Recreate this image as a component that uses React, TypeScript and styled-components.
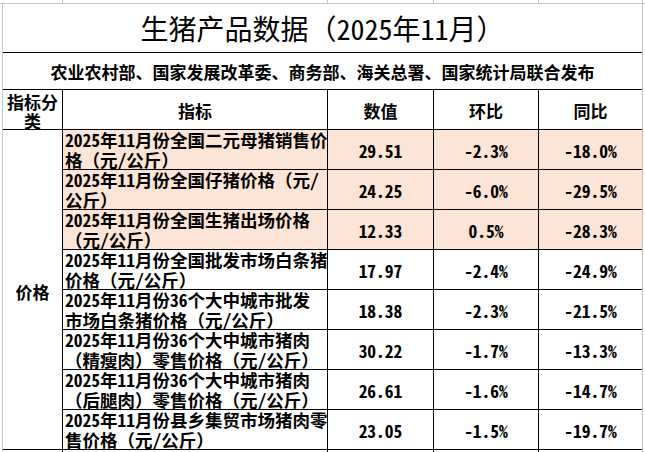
import React from "react";
import styled, { createGlobalStyle } from "styled-components";

const GlobalStyle = createGlobalStyle`
  html, body {
    margin: 0;
    padding: 0;
    background: #ffffff;
    overflow: hidden;
  }
  body {
    width: 645px;
    height: 452px;
    font-family: "Noto Sans CJK SC", "Liberation Sans", sans-serif;
    color: #000000;
  }
`;

const GRID_GRAY = "#c4c4c4";
const PEACH = "#fce4d6";

const Page = styled.div`
  width: 645px;
  height: 452px;
  overflow: hidden;
`;

const TopStrip = styled.div`
  display: grid;
  grid-template-columns: 63px 265px 106px 105px 104px 1fr;
  height: 3px;
  border-bottom: 1px solid ${GRID_GRAY};
`;

const StripCell = styled.div<{ $last?: boolean }>`
  border-right: ${(p) => (p.$last ? "none" : `1px solid ${GRID_GRAY}`)};
`;

const Sheet = styled.div`
  margin-left: 2px;
  width: 639px;
  display: grid;
  grid-template-columns: 59px 264px 105px 104px 103px;
  grid-template-rows: 48px 36px 39px repeat(8, 39px) 20px;
  gap: 1px;
  background: #000000;
  border-left: 1px solid ${GRID_GRAY};
  border-right: 1px solid ${GRID_GRAY};
`;

const Cell = styled.div<{ $fill?: boolean }>`
  background: ${(p) => (p.$fill ? PEACH : "#ffffff")};
  display: flex;
  align-items: center;
  justify-content: center;
  overflow: visible;
  min-width: 0;
`;

const TitleCell = styled(Cell)`
  grid-column: 1 / -1;
  font-size: 28px;
  font-weight: 400;
  line-height: 1;
`;

const SubtitleCell = styled(Cell)`
  grid-column: 1 / -1;
  font-size: 17px;
  font-weight: 700;
  line-height: 20px;
  padding-top: 2px;
`;

const HeaderCell = styled(Cell)`
  font-size: 17px;
  font-weight: 700;
  line-height: 19px;
  text-align: center;
  padding-top: 2px;
`;

const CategoryCell = styled(Cell)`
  grid-column: 1;
  grid-row: 4 / span 8;
  font-size: 17px;
  font-weight: 700;
  padding-top: 3px;
`;

const IndicatorCell = styled(Cell)`
  justify-content: flex-start;
  padding-left: 2px;
  font-size: 17.5px;
  font-weight: 700;
  line-height: 20px;
`;

const Lines = styled.div`
  display: flex;
  flex-direction: column;
  padding-top: 1px;
`;

const Line = styled.span`
  white-space: nowrap;
`;

/* ASCII runs use the font's half-width forms, as the sheet's CJK font does */
const Latin = styled.span`
  font-feature-settings: "hwid" 1;
`;

const NumberCell = styled(Cell)`
  font-size: 17.5px;
  font-weight: 700;
  line-height: 20px;
  padding-top: 2px;
  font-feature-settings: "hwid" 1;
`;

function Mixed({ text }: { text: string }) {
  const parts = text.split(/([\x20-\x7e]+)/).filter((p) => p.length > 0);
  return (
    <>
      {parts.map((p, i) =>
        /^[\x20-\x7e]+$/.test(p) ? (
          <Latin key={i}>{p}</Latin>
        ) : (
          <React.Fragment key={i}>{p}</React.Fragment>
        )
      )}
    </>
  );
}

type Row = {
  lines: string[];
  value: string;
  mom: string;
  yoy: string;
  highlight?: boolean;
};

const rows: Row[] = [
  {
    lines: ["2025年11月份全国二元母猪销售价", "格（元/公斤）"],
    value: "29.51",
    mom: "-2.3%",
    yoy: "-18.0%",
    highlight: true,
  },
  {
    lines: ["2025年11月份全国仔猪价格（元/", "公斤）"],
    value: "24.25",
    mom: "-6.0%",
    yoy: "-29.5%",
    highlight: true,
  },
  {
    lines: ["2025年11月份全国生猪出场价格", "（元/公斤）"],
    value: "12.33",
    mom: "0.5%",
    yoy: "-28.3%",
    highlight: true,
  },
  {
    lines: ["2025年11月份全国批发市场白条猪", "价格（元/公斤）"],
    value: "17.97",
    mom: "-2.4%",
    yoy: "-24.9%",
  },
  {
    lines: ["2025年11月份36个大中城市批发", "市场白条猪价格（元/公斤）"],
    value: "18.38",
    mom: "-2.3%",
    yoy: "-21.5%",
  },
  {
    lines: ["2025年11月份36个大中城市猪肉", "（精瘦肉）零售价格（元/公斤）"],
    value: "30.22",
    mom: "-1.7%",
    yoy: "-13.3%",
  },
  {
    lines: ["2025年11月份36个大中城市猪肉", "（后腿肉）零售价格（元/公斤）"],
    value: "26.61",
    mom: "-1.6%",
    yoy: "-14.7%",
  },
  {
    lines: ["2025年11月份县乡集贸市场猪肉零", "售价格（元/公斤）"],
    value: "23.05",
    mom: "-1.5%",
    yoy: "-19.7%",
  },
];

export default function App() {
  return (
    <Page>
      <GlobalStyle />
      <TopStrip>
        <StripCell />
        <StripCell />
        <StripCell />
        <StripCell />
        <StripCell />
        <StripCell $last />
      </TopStrip>
      <Sheet>
        <TitleCell>
          <Mixed text="生猪产品数据（2025年11月）" />
        </TitleCell>
        <SubtitleCell>
          农业农村部、国家发展改革委、商务部、海关总署、国家统计局联合发布
        </SubtitleCell>
        <HeaderCell>
          <Lines>
            <Line>指标分</Line>
            <Line>类</Line>
          </Lines>
        </HeaderCell>
        <HeaderCell>指标</HeaderCell>
        <HeaderCell>数值</HeaderCell>
        <HeaderCell>环比</HeaderCell>
        <HeaderCell>同比</HeaderCell>
        <CategoryCell>价格</CategoryCell>
        {rows.map((r, i) => (
          <React.Fragment key={i}>
            <IndicatorCell $fill={r.highlight}>
              <Lines>
                {r.lines.map((l, j) => (
                  <Line key={j}>
                    <Mixed text={l} />
                  </Line>
                ))}
              </Lines>
            </IndicatorCell>
            <NumberCell $fill={r.highlight}>{r.value}</NumberCell>
            <NumberCell $fill={r.highlight}>{r.mom}</NumberCell>
            <NumberCell $fill={r.highlight}>{r.yoy}</NumberCell>
          </React.Fragment>
        ))}
        <Cell />
        <Cell />
        <Cell />
        <Cell />
        <Cell />
      </Sheet>
    </Page>
  );
}
